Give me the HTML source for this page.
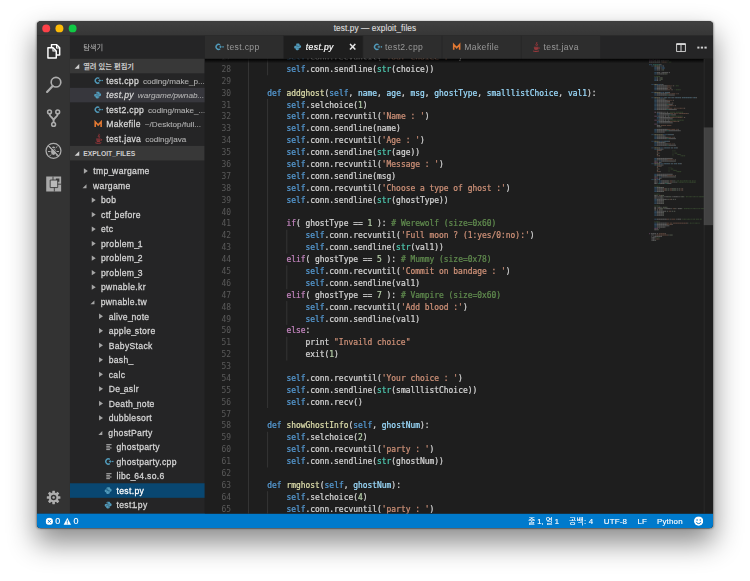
<!DOCTYPE html><html lang="ko"><head><meta charset="utf-8"><title>test.py — exploit_files</title><style>
*{box-sizing:border-box;margin:0;padding:0}
html,body{width:750px;height:581px;overflow:hidden;background:#fff}
#stage{position:absolute;left:0;top:0;width:1136px;height:880px;transform:scale(0.660211);transform-origin:0 0;font-family:"Liberation Sans","Noto Sans CJK KR",sans-serif}
#win{position:absolute;left:56px;top:32.300px;width:1024px;height:768px;background:#1e1e1e;border-radius:6px;overflow:hidden;box-shadow:0 0 1px rgba(0,0,0,.7)}
#shadow{position:absolute;left:56px;top:32.300px;width:1024px;height:768px;border-radius:6px;box-shadow:0 21px 42px 0 rgba(0,0,0,.46),0 0 3px rgba(0,0,0,.3)}
#title{position:absolute;left:0;top:0;width:100%;height:22px;background:linear-gradient(#404040,#363636);color:#dcdcdc;-webkit-text-stroke:.2px #dcdcdc;font-size:12.500px;text-align:center;line-height:22px;letter-spacing:.15px}
.tl{position:absolute;top:5px;width:12px;height:12px;border-radius:50%}
#act{position:absolute;left:0;top:22px;width:50px;height:724px;background:#333}
#act svg{position:absolute}
#side{position:absolute;left:50px;top:22px;width:204px;height:724px;background:#252526;overflow:hidden;color:#ccc}
.sb-title{position:absolute;left:20px;top:0;height:35px;line-height:35px;font-size:11px;color:#bbb;font-family:"Liberation Sans","Noto Sans CJK KR",sans-serif}
.sec{position:absolute;left:0;width:100%;height:22px;background:#383838;line-height:22px;font-size:11px;font-weight:bold;color:#ccc;padding-left:20px;white-space:nowrap}
.sec .kr{font-family:"Liberation Sans","Noto Sans CJK KR",sans-serif;font-weight:bold}
.row{position:absolute;left:0;width:100%;height:22px;line-height:24px;font-size:13px;white-space:nowrap;overflow:hidden;color:#d6d6d6}
.u{letter-spacing:-2px}
.row .nm{letter-spacing:.5px;-webkit-text-stroke:.38px currentColor}
.row .ds{font-size:12.300px;color:#b2b2b2;margin-left:6px;letter-spacing:0;-webkit-text-stroke:.15px currentColor}
.row.oe{padding-left:35.300px;line-height:23px}
.row.tr{line-height:23px}
.row.act{background:#37373d}
.row.it .nm,.row.it .ds{font-style:italic}
.row.sel{background:#094771;color:#fff}
.fi{display:inline-block;width:16px;height:16px;vertical-align:-3px;margin-right:3.700px}
.tw{display:inline-block;width:0;height:0;vertical-align:middle;margin-right:8px}
.tw.c{border-left:6px solid #a6a6a6;border-top:4.500px solid transparent;border-bottom:4.500px solid transparent;margin-left:1.500px;margin-right:8.500px;position:relative;top:-1.500px}
.tw.o{border-bottom:6.500px solid #a6a6a6;border-left:6.500px solid transparent;margin-left:0;margin-right:9.500px;position:relative;top:0}
.sec .tw.o{position:absolute;left:6.500px;top:7.500px;margin:0;border-bottom:7px solid #cfcfcf;border-left-width:7px}
#tabs{position:absolute;left:254px;top:22px;width:770px;height:35px;background:#252526}
.tab{position:absolute;top:0;width:120px;height:35px;background:#2d2d2d;color:#999;font-size:13px;line-height:35px;padding-left:13.600px;white-space:nowrap;border-right:1px solid #252526}
.tab .nm{letter-spacing:.55px}
.tab.act{background:#1e1e1e;color:#fff;font-style:italic}
.tab.act .nm{-webkit-text-stroke:.3px #fff}
.tab .close{position:absolute;left:98.800px;top:0;font-style:normal;font-size:19px;font-weight:bold;color:#e8e8e8}
#ed{position:absolute;left:254px;top:57px;width:770px;height:689px;background:#1e1e1e;overflow:hidden;font-family:"DejaVu Sans Mono","Liberation Mono",monospace;font-size:12px;color:#d4d4d4}
.ln{position:absolute;left:0;width:40px;height:18px;line-height:18px;text-align:right;color:#5a5a5a}
.cl{position:absolute;left:66px;height:18px;line-height:18px;white-space:pre;-webkit-text-stroke:.35px currentColor}
.ig{position:absolute;width:1px;background:#404040}
.k{color:#569cd6}.c{color:#c586c0}.s{color:#ce9178}.m{color:#608b4e}.n{color:#b5cea8}.f{color:#dcdcaa}.p{color:#9cdcfe}.t{color:#4ec9b0}
#edshadow{position:absolute;left:0;top:0;width:756px;height:7px;background:linear-gradient(#000 0,rgba(0,0,0,0) 100%);opacity:.95}
.mm{position:absolute;left:673px;top:0}
#vs{position:absolute;left:756px;top:0;width:14px;height:689px;border-left:1px solid #2f2f2f}
#vslider{position:absolute;left:756px;top:103.500px;width:14px;height:148px;background:rgba(121,121,121,.4)}
#status{position:absolute;left:0;top:746px;width:100%;height:22px;background:#007acc;color:#fff;font-size:12px;line-height:22px;white-space:nowrap}
#status span{position:absolute;top:0;font-family:"Liberation Sans","Noto Sans CJK KR",sans-serif;letter-spacing:.3px;-webkit-text-stroke:.2px #fff}
</style></head><body>
<div id="stage"><div id="shadow"></div><div id="win">
<div id="title"><span class="tl" style="left:8px;background:#fd4148"></span><span class="tl" style="left:28px;background:#fdbb07"></span><span class="tl" style="left:48px;background:#0fc944"></span>test.py — exploit_files</div>
<div id="act"><svg width="50" height="724" viewBox="0 0 50 724"><g fill="none" stroke="#fff" stroke-width="2.200" stroke-linejoin="round"><path d="M22 17.200v-3.600h7.800l4.600 4.800v10.800h-4.800"/><path d="M29.600 13.800v4.800h4.600" stroke-width="1.600"/><path d="M16.600 18.300h7.800l4.800 4.800v10.800h-12.600z"/><path d="M24.200 18.500v4.800h4.800" stroke-width="1.600"/></g><g fill="none" stroke="#adadad"><circle cx="28.800" cy="70.500" r="7.300" stroke-width="2.500"/><path d="M23.800 76.200l-8.500 9" stroke-width="3.300" stroke-linecap="round"/><g stroke-width="2.300"><circle cx="19" cy="115.500" r="2.900"/><circle cx="31.400" cy="115.500" r="2.900"/><circle cx="25.200" cy="134.500" r="2.900"/></g><path d="M19 118.500c0 5 6.200 6 6.200 10v3M31.400 118.500c0 5-6.200 6-6.200 10v3" stroke-width="2.900"/><circle cx="25" cy="174.500" r="11.300" stroke-width="1.900"/><path d="M17.400 166.900l15.400 15.400" stroke-width="1.600"/><path d="M21.500 170l-2.500-2.500M28.500 170l2.500-2.500M20.500 175.500h-3.800M29.500 175.500h3.800M21.500 180l-2.500 2.500M28.500 180l2.500 2.500" stroke-width="1.500"/></g><ellipse cx="25" cy="176" rx="3.600" ry="4.600" fill="#adadad"/><path d="M22.300 170.500a2.700 2.700 0 0 1 5.400 0z" fill="#adadad"/><path d="M18.600 165.700l15.400 15.400" stroke="#333" stroke-width="1.300"/><path d="M17.400 166.900l15.400 15.400" stroke="#adadad" stroke-width="1.500"/><path d="M14 213.500h22.600v22.600H14z" fill="#a9a9a9"/><path d="M22.500 216.200h5.200v5.200h-5.200z" fill="#3a3a3a" transform="translate(6.200 0)"/><path d="M20 218.700h11.400v11.400H20z" fill="#b9b9b9" stroke="#333" stroke-width="1.300"/><path d="M24.300 213.500v5.200M31.400 225h5.200M26.300 230.100v6" stroke="#333" stroke-width="1.300" fill="none"/><g transform="translate(25.200 699.500)"><g fill="#adadad"><rect x="-2" y="-10.300" width="4" height="5" rx=".6" transform="rotate(0)"/><rect x="-2" y="-10.300" width="4" height="5" rx=".6" transform="rotate(45)"/><rect x="-2" y="-10.300" width="4" height="5" rx=".6" transform="rotate(90)"/><rect x="-2" y="-10.300" width="4" height="5" rx=".6" transform="rotate(135)"/><rect x="-2" y="-10.300" width="4" height="5" rx=".6" transform="rotate(180)"/><rect x="-2" y="-10.300" width="4" height="5" rx=".6" transform="rotate(225)"/><rect x="-2" y="-10.300" width="4" height="5" rx=".6" transform="rotate(270)"/><rect x="-2" y="-10.300" width="4" height="5" rx=".6" transform="rotate(315)"/></g><circle r="5.800" fill="none" stroke="#adadad" stroke-width="3.200"/><circle r="1.900" fill="#adadad"/></g></svg></div>
<div id="side"><div class="sb-title">탐색기</div>
<div class="sec" style="top:35px"><span class="tw o"></span><span class="kr">열려 있는 편집기</span></div>
<div class="row oe" style="top:57px"><svg class="fi" viewBox="0 0 16 16"><path d="M9.400 4.800A3.900 3.900 0 1 0 9.400 11.200" fill="none" stroke="#519aba" stroke-width="2.100"/><path d="M8 8h4M10 6v4M12.800 8h2M13.800 7v2" stroke="#519aba" stroke-width="1.300" fill="none"/></svg><span class="nm">test.cpp</span><span class="ds">coding/make_p...</span></div>
<div class="row oe act it" style="top:79px"><svg class="fi" viewBox="0.600 -.700 17.400 17.400"><path d="M7.9 2.5c-2 0-2.6.8-2.6 1.8v1.3h2.8v.6H4.2c-1.2 0-1.9 1-1.9 2.3 0 1.400.7 2.300 1.800 2.300h1.100V9.500c0-1 .9-1.900 1.900-1.900h2.700c.9 0 1.500-.7 1.500-1.500V4.300c0-1-.9-1.800-1.800-1.800zM6.600 3.500a.5.500 0 1 1 0 1 .5.500 0 0 1 0-1z" fill="#519aba"/><path d="M8.100 13.500c2 0 2.600-.8 2.600-1.800v-1.300H7.900v-.6h3.900c1.200 0 1.900-1 1.900-2.300 0-1.400-.7-2.300-1.800-2.300h-1.100v1.300c0 1-.9 1.900-1.900 1.900H6.200c-.9 0-1.500.7-1.500 1.500v1.800c0 1 .9 1.800 1.800 1.800zM9.400 12.500a.5.500 0 1 1 0-1 .5.500 0 0 1 0 1z" fill="#519aba"/></svg><span class="nm">test.py</span><span class="ds">wargame/pwnab...</span></div>
<div class="row oe" style="top:101px"><svg class="fi" viewBox="0 0 16 16"><path d="M9.400 4.800A3.900 3.900 0 1 0 9.400 11.200" fill="none" stroke="#519aba" stroke-width="2.100"/><path d="M8 8h4M10 6v4M12.800 8h2M13.800 7v2" stroke="#519aba" stroke-width="1.300" fill="none"/></svg><span class="nm">test2.cpp</span><span class="ds">coding/make_...</span></div>
<div class="row oe" style="top:123px"><svg class="fi" viewBox="0 0 16 16"><path d="M3.200 12.300V4.500l4.500 4.800 4.500-4.800v7.800" fill="none" stroke="#e37933" stroke-width="2.400" stroke-linejoin="miter"/></svg><span class="nm">Makefile</span><span class="ds">~/Desktop/full...</span></div>
<div class="row oe" style="top:145px"><svg class="fi" viewBox="0 0 16 16"><path d="M8.800 .6c1.700 1.700-2.300 3-.7 5.300M10.100 3.400c.9 1.200-1.600 1.900-.4 3.300" fill="none" stroke="#cc3e44" stroke-width="1"/><path d="M4.600 8.600h6.800M5 10.400h6M5.600 12.200h4.800M3.400 14.200c2.600 1.200 6.800 1.100 9-.1M12 8.900c1.500 0 1.500 1.800-.5 2.100" fill="none" stroke="#cc3e44" stroke-width="1.050"/></svg><span class="nm">test.java</span><span class="ds">coding/java</span></div>
<div class="sec" style="top:167px"><span class="tw o"></span><span class="en" style="font-size:10.3px">EXPLOIT_FILES</span></div>
<div class="row tr" style="top:193.4px;padding-left:19.4px"><span class="tw c"></span><span class="nm">tmp<span class="u">_</span>wargame</span></div>
<div class="row tr" style="top:215.4px;padding-left:19.4px"><span class="tw o"></span><span class="nm">wargame</span></div>
<div class="row tr" style="top:237.4px;padding-left:31.0px"><span class="tw c"></span><span class="nm">bob</span></div>
<div class="row tr" style="top:259.4px;padding-left:31.0px"><span class="tw c"></span><span class="nm">ctf<span class="u">_</span>before</span></div>
<div class="row tr" style="top:281.4px;padding-left:31.0px"><span class="tw c"></span><span class="nm">etc</span></div>
<div class="row tr" style="top:303.4px;padding-left:31.0px"><span class="tw c"></span><span class="nm">problem<span class="u">_</span><span class="u">1</span></span></div>
<div class="row tr" style="top:325.4px;padding-left:31.0px"><span class="tw c"></span><span class="nm">problem<span class="u">_</span>2</span></div>
<div class="row tr" style="top:347.4px;padding-left:31.0px"><span class="tw c"></span><span class="nm">problem<span class="u">_</span>3</span></div>
<div class="row tr" style="top:369.4px;padding-left:31.0px"><span class="tw c"></span><span class="nm">pwnable.kr</span></div>
<div class="row tr" style="top:391.4px;padding-left:31.0px"><span class="tw o"></span><span class="nm">pwnable.tw</span></div>
<div class="row tr" style="top:413.4px;padding-left:42.599999999999994px"><span class="tw c"></span><span class="nm">alive<span class="u">_</span>note</span></div>
<div class="row tr" style="top:435.4px;padding-left:42.599999999999994px"><span class="tw c"></span><span class="nm">apple<span class="u">_</span>store</span></div>
<div class="row tr" style="top:457.4px;padding-left:42.599999999999994px"><span class="tw c"></span><span class="nm">BabyStack</span></div>
<div class="row tr" style="top:479.4px;padding-left:42.599999999999994px"><span class="tw c"></span><span class="nm">bash<span class="u">_</span></span></div>
<div class="row tr" style="top:501.4px;padding-left:42.599999999999994px"><span class="tw c"></span><span class="nm">calc</span></div>
<div class="row tr" style="top:523.4px;padding-left:42.599999999999994px"><span class="tw c"></span><span class="nm">De<span class="u">_</span>aslr</span></div>
<div class="row tr" style="top:545.4px;padding-left:42.599999999999994px"><span class="tw c"></span><span class="nm">Death<span class="u">_</span>note</span></div>
<div class="row tr" style="top:567.4px;padding-left:42.599999999999994px"><span class="tw c"></span><span class="nm">dubblesort</span></div>
<div class="row tr" style="top:589.4px;padding-left:42.599999999999994px"><span class="tw o"></span><span class="nm">ghostParty</span></div>
<div class="row tr" style="top:611.4px;padding-left:50.8px"><svg class="fi" viewBox="0 0 16 16"><path d="M4 4.500h8M4 7h5.500M4 9.500h8M4 12h5.500" stroke="#c5c5c5" stroke-width="1.300" fill="none"/></svg><span class="nm">ghostparty</span></div>
<div class="row tr" style="top:633.4px;padding-left:50.8px"><svg class="fi" viewBox="0 0 16 16"><path d="M9.400 4.800A3.900 3.900 0 1 0 9.400 11.200" fill="none" stroke="#519aba" stroke-width="2.100"/><path d="M8 8h4M10 6v4M12.800 8h2M13.800 7v2" stroke="#519aba" stroke-width="1.300" fill="none"/></svg><span class="nm">ghostparty.cpp</span></div>
<div class="row tr" style="top:655.4px;padding-left:50.8px"><svg class="fi" viewBox="0 0 16 16"><path d="M4 4.500h8M4 7h5.500M4 9.500h8M4 12h5.500" stroke="#c5c5c5" stroke-width="1.300" fill="none"/></svg><span class="nm">libc<span class="u">_</span>64.so.6</span></div>
<div class="row tr sel" style="top:677.4px;padding-left:50.8px"><svg class="fi" viewBox="0.600 -.700 17.400 17.400"><path d="M7.9 2.5c-2 0-2.6.8-2.6 1.8v1.3h2.8v.6H4.2c-1.2 0-1.9 1-1.9 2.3 0 1.400.7 2.300 1.800 2.300h1.100V9.500c0-1 .9-1.900 1.900-1.900h2.700c.9 0 1.500-.7 1.500-1.500V4.300c0-1-.9-1.800-1.800-1.800zM6.600 3.500a.5.500 0 1 1 0 1 .5.500 0 0 1 0-1z" fill="#519aba"/><path d="M8.100 13.500c2 0 2.600-.8 2.600-1.800v-1.300H7.900v-.6h3.900c1.200 0 1.900-1 1.900-2.300 0-1.400-.7-2.300-1.800-2.300h-1.100v1.300c0 1-.9 1.900-1.900 1.900H6.200c-.9 0-1.500.7-1.500 1.500v1.800c0 1 .9 1.800 1.800 1.800zM9.400 12.500a.5.500 0 1 1 0-1 .5.500 0 0 1 0 1z" fill="#519aba"/></svg><span class="nm">test.py</span></div>
<div class="row tr" style="top:699.4px;padding-left:50.8px"><svg class="fi" viewBox="0.600 -.700 17.400 17.400"><path d="M7.9 2.5c-2 0-2.6.8-2.6 1.8v1.3h2.8v.6H4.2c-1.2 0-1.9 1-1.9 2.3 0 1.400.7 2.300 1.800 2.300h1.100V9.500c0-1 .9-1.900 1.900-1.900h2.700c.9 0 1.500-.7 1.500-1.500V4.300c0-1-.9-1.800-1.800-1.800zM6.600 3.500a.5.500 0 1 1 0 1 .5.500 0 0 1 0-1z" fill="#519aba"/><path d="M8.100 13.500c2 0 2.600-.8 2.600-1.800v-1.300H7.900v-.6h3.900c1.200 0 1.900-1 1.900-2.300 0-1.400-.7-2.300-1.800-2.300h-1.100v1.300c0 1-.9 1.900-1.900 1.900H6.200c-.9 0-1.500.7-1.500 1.500v1.800c0 1 .9 1.800 1.800 1.800zM9.400 12.500a.5.500 0 1 1 0-1 .5.500 0 0 1 0 1z" fill="#519aba"/></svg><span class="nm">test<span class="u">1</span>.py</span></div></div>
<div id="tabs"><div class="tab" style="left:0px"><svg class="fi" viewBox="0 0 16 16"><path d="M9.400 4.800A3.900 3.900 0 1 0 9.400 11.200" fill="none" stroke="#519aba" stroke-width="2.100"/><path d="M8 8h4M10 6v4M12.800 8h2M13.800 7v2" stroke="#519aba" stroke-width="1.300" fill="none"/></svg><span class="nm">test.cpp</span></div>
<div class="tab act" style="left:120px"><svg class="fi" viewBox="0.600 -.700 17.400 17.400"><path d="M7.9 2.5c-2 0-2.6.8-2.6 1.8v1.3h2.8v.6H4.2c-1.2 0-1.9 1-1.9 2.3 0 1.400.7 2.300 1.800 2.300h1.100V9.500c0-1 .9-1.900 1.900-1.900h2.700c.9 0 1.500-.7 1.500-1.500V4.300c0-1-.9-1.800-1.800-1.800zM6.600 3.500a.5.500 0 1 1 0 1 .5.500 0 0 1 0-1z" fill="#519aba"/><path d="M8.100 13.500c2 0 2.600-.8 2.600-1.800v-1.300H7.900v-.6h3.900c1.200 0 1.900-1 1.900-2.300 0-1.400-.7-2.300-1.800-2.300h-1.100v1.300c0 1-.9 1.900-1.900 1.900H6.200c-.9 0-1.500.7-1.500 1.500v1.800c0 1 .9 1.800 1.800 1.800zM9.400 12.500a.5.500 0 1 1 0-1 .5.500 0 0 1 0 1z" fill="#519aba"/></svg><span class="nm">test.py</span><span class="close">×</span></div>
<div class="tab" style="left:240px"><svg class="fi" viewBox="0 0 16 16"><path d="M9.400 4.800A3.900 3.900 0 1 0 9.400 11.200" fill="none" stroke="#519aba" stroke-width="2.100"/><path d="M8 8h4M10 6v4M12.800 8h2M13.800 7v2" stroke="#519aba" stroke-width="1.300" fill="none"/></svg><span class="nm">test2.cpp</span></div>
<div class="tab" style="left:360px"><svg class="fi" viewBox="0 0 16 16"><path d="M3.200 12.300V4.500l4.500 4.800 4.500-4.800v7.800" fill="none" stroke="#e37933" stroke-width="2.400" stroke-linejoin="miter"/></svg><span class="nm">Makefile</span></div>
<div class="tab" style="left:480px"><svg class="fi" viewBox="0 0 16 16"><path d="M8.800 .6c1.700 1.700-2.300 3-.7 5.300M10.100 3.400c.9 1.200-1.600 1.900-.4 3.300" fill="none" stroke="#cc3e44" stroke-width="1"/><path d="M4.600 8.600h6.800M5 10.400h6M5.600 12.200h4.800M3.400 14.200c2.600 1.200 6.800 1.100 9-.1M12 8.900c1.500 0 1.500 1.800-.5 2.100" fill="none" stroke="#cc3e44" stroke-width="1.050"/></svg><span class="nm">test.java</span></div><svg style="position:absolute;left:714px;top:11px" width="15" height="14" viewBox="0 0 15 14"><path d="M.8 1.500h13.400v11.700H.8zM7.500 1.500v11.700" fill="none" stroke="#d8d8d8" stroke-width="1.500"/><path d="M.5.500h14v2.800H.500z" fill="#d8d8d8"/></svg><svg style="position:absolute;left:745.500px;top:15.300px" width="15" height="4" viewBox="0 0 15 4"><path d="M0 .3h3.400v3.400H0zM5.500.3h3.400v3.400H5.500zM11 .3h3.400v3.400H11z" fill="#d0d0d0"/></svg></div>
<div id="ed"><div class="ln" style="top:-11.1px">27</div><div class="cl" style="top:-11.1px">        <span class="k">self</span>.conn.recvuntil(<span class="s">'Your choice : '</span>)</div>
<div class="ln" style="top:6.9px">28</div><div class="cl" style="top:6.9px">        <span class="k">self</span>.conn.sendline(<span class="t">str</span>(choice))</div>
<div class="ln" style="top:24.9px">29</div><div class="cl" style="top:24.9px"></div>
<div class="ln" style="top:42.9px">30</div><div class="cl" style="top:42.9px">    <span class="k">def</span> <span class="f">addghost</span>(<span class="k">self</span>, <span class="p">name</span>, <span class="p">age</span>, <span class="p">msg</span>, <span class="p">ghostType</span>, <span class="p">smalllistChoice</span>, <span class="p">val1</span>):</div>
<div class="ln" style="top:60.9px">31</div><div class="cl" style="top:60.9px">        <span class="k">self</span>.selchoice(<span class="n">1</span>)</div>
<div class="ln" style="top:78.9px">32</div><div class="cl" style="top:78.9px">        <span class="k">self</span>.conn.recvuntil(<span class="s">'Name : '</span>)</div>
<div class="ln" style="top:96.9px">33</div><div class="cl" style="top:96.9px">        <span class="k">self</span>.conn.sendline(name)</div>
<div class="ln" style="top:114.9px">34</div><div class="cl" style="top:114.9px">        <span class="k">self</span>.conn.recvuntil(<span class="s">'Age : '</span>)</div>
<div class="ln" style="top:132.9px">35</div><div class="cl" style="top:132.9px">        <span class="k">self</span>.conn.sendline(<span class="t">str</span>(age))</div>
<div class="ln" style="top:150.9px">36</div><div class="cl" style="top:150.9px">        <span class="k">self</span>.conn.recvuntil(<span class="s">'Message : '</span>)</div>
<div class="ln" style="top:168.9px">37</div><div class="cl" style="top:168.9px">        <span class="k">self</span>.conn.sendline(msg)</div>
<div class="ln" style="top:186.9px">38</div><div class="cl" style="top:186.9px">        <span class="k">self</span>.conn.recvuntil(<span class="s">'Choose a type of ghost :'</span>)</div>
<div class="ln" style="top:204.9px">39</div><div class="cl" style="top:204.9px">        <span class="k">self</span>.conn.sendline(<span class="t">str</span>(ghostType))</div>
<div class="ln" style="top:222.9px">40</div><div class="cl" style="top:222.9px"></div>
<div class="ln" style="top:240.9px">41</div><div class="cl" style="top:240.9px">        <span class="c">if</span>( ghostType == <span class="n">1</span> ): <span class="m"># Werewolf (size=0x60)</span></div>
<div class="ln" style="top:258.9px">42</div><div class="cl" style="top:258.9px">            <span class="k">self</span>.conn.recvuntil(<span class="s">'Full moon ? (1:yes/0:no):'</span>)</div>
<div class="ln" style="top:276.9px">43</div><div class="cl" style="top:276.9px">            <span class="k">self</span>.conn.sendline(<span class="t">str</span>(val1))</div>
<div class="ln" style="top:294.9px">44</div><div class="cl" style="top:294.9px">        <span class="c">elif</span>( ghostType == <span class="n">5</span> ): <span class="m"># Mummy (size=0x78)</span></div>
<div class="ln" style="top:312.9px">45</div><div class="cl" style="top:312.9px">            <span class="k">self</span>.conn.recvuntil(<span class="s">'Commit on bandage : '</span>)</div>
<div class="ln" style="top:330.9px">46</div><div class="cl" style="top:330.9px">            <span class="k">self</span>.conn.sendline(val1)</div>
<div class="ln" style="top:348.9px">47</div><div class="cl" style="top:348.9px">        <span class="c">elif</span>( ghostType == <span class="n">7</span> ): <span class="m"># Vampire (size=0x60)</span></div>
<div class="ln" style="top:366.9px">48</div><div class="cl" style="top:366.9px">            <span class="k">self</span>.conn.recvuntil(<span class="s">'Add blood :'</span>)</div>
<div class="ln" style="top:384.9px">49</div><div class="cl" style="top:384.9px">            <span class="k">self</span>.conn.sendline(val1)</div>
<div class="ln" style="top:402.9px">50</div><div class="cl" style="top:402.9px">        <span class="c">else</span>:</div>
<div class="ln" style="top:420.9px">51</div><div class="cl" style="top:420.9px">            print <span class="s">"Invaild choice"</span></div>
<div class="ln" style="top:438.9px">52</div><div class="cl" style="top:438.9px">            exit(<span class="n">1</span>)</div>
<div class="ln" style="top:456.9px">53</div><div class="cl" style="top:456.9px"></div>
<div class="ln" style="top:474.9px">54</div><div class="cl" style="top:474.9px">        <span class="k">self</span>.conn.recvuntil(<span class="s">'Your choice : '</span>)</div>
<div class="ln" style="top:492.9px">55</div><div class="cl" style="top:492.9px">        <span class="k">self</span>.conn.sendline(<span class="t">str</span>(smalllistChoice))</div>
<div class="ln" style="top:510.9px">56</div><div class="cl" style="top:510.9px">        <span class="k">self</span>.conn.recv()</div>
<div class="ln" style="top:528.9px">57</div><div class="cl" style="top:528.9px"></div>
<div class="ln" style="top:546.9px">58</div><div class="cl" style="top:546.9px">    <span class="k">def</span> <span class="f">showGhostInfo</span>(<span class="k">self</span>, <span class="p">ghostNum</span>):</div>
<div class="ln" style="top:564.9px">59</div><div class="cl" style="top:564.9px">        <span class="k">self</span>.selchoice(<span class="n">2</span>)</div>
<div class="ln" style="top:582.9px">60</div><div class="cl" style="top:582.9px">        <span class="k">self</span>.conn.recvuntil(<span class="s">'party : '</span>)</div>
<div class="ln" style="top:600.9px">61</div><div class="cl" style="top:600.9px">        <span class="k">self</span>.conn.sendline(<span class="t">str</span>(ghostNum))</div>
<div class="ln" style="top:618.9px">62</div><div class="cl" style="top:618.9px"></div>
<div class="ln" style="top:636.9px">63</div><div class="cl" style="top:636.9px">    <span class="k">def</span> <span class="f">rmghost</span>(<span class="k">self</span>, <span class="p">ghostNum</span>):</div>
<div class="ln" style="top:654.9px">64</div><div class="cl" style="top:654.9px">        <span class="k">self</span>.selchoice(<span class="n">4</span>)</div>
<div class="ln" style="top:672.9px">65</div><div class="cl" style="top:672.9px">        <span class="k">self</span>.conn.recvuntil(<span class="s">'party : '</span>)</div>
<div class="ig" style="left:66.0px;top:-11.1px;height:720px"></div>
<div class="ig" style="left:94.9px;top:-11.1px;height:36px"></div>
<div class="ig" style="left:94.9px;top:60.9px;height:468px"></div>
<div class="ig" style="left:94.9px;top:564.9px;height:54px"></div>
<div class="ig" style="left:94.9px;top:654.9px;height:54px"></div>
<div class="ig" style="left:123.8px;top:258.9px;height:36px"></div>
<div class="ig" style="left:123.8px;top:312.9px;height:36px"></div>
<div class="ig" style="left:123.8px;top:366.9px;height:36px"></div>
<div class="ig" style="left:123.8px;top:420.9px;height:36px"></div><svg class="mm" width="84" height="276" viewBox="0 0 84 276"><path d="M0 1h4M9 1h6M0 3h6M8 81h2M8 87h4M8 93h4M8 99h4M8 157h6M8 181h6M8 257h6M0 265h2" stroke="#c586c0" stroke-width="1.200" stroke-dasharray=".7 .3" fill="none" opacity=".62"/><path d="M5 1h3M16 1h1M7 3h4M12 3h5M18 3h6M25 3h2M28 3h2M0 5h17M18 5h1M16 9h3M16 11h1M21 11h2M12 13h5M18 13h1M12 15h5M18 15h1M12 17h5M18 17h1M12 21h5M18 21h1M20 21h9M30 21h2M12 23h11M27 23h1M12 29h2M15 29h1M12 31h2M15 31h1M12 33h2M15 33h1M12 39h1M17 39h1M20 39h2M12 41h16M37 41h1M12 43h16M33 43h1M12 45h16M33 45h1M12 47h16M35 47h1M17 51h1M22 51h1M30 51h2M12 53h16M44 53h1M12 55h15M30 55h9M16 59h1M21 59h1M27 59h1M32 59h1M37 59h1M48 59h1M65 59h1M71 59h2M12 61h11M24 61h1M12 63h16M37 63h1M12 65h20M12 67h16M36 67h1M12 69h15M30 69h6M12 71h16M40 71h1M12 73h19M12 75h16M54 75h1M12 77h15M30 77h12M10 81h1M12 81h9M22 81h2M27 81h2M16 83h16M59 83h1M16 85h15M34 85h7M12 87h1M14 87h9M24 87h2M29 87h2M16 89h16M54 89h1M16 91h20M12 93h1M14 93h9M24 93h2M29 93h2M16 95h16M45 95h1M16 97h20M12 99h1M12 101h5M12 103h5M18 103h1M12 107h16M44 107h1M12 109h15M30 109h18M12 111h12M21 115h1M26 115h1M36 115h2M12 117h11M24 117h1M12 119h16M38 119h1M12 121h15M30 121h11M15 125h1M20 125h1M30 125h2M12 127h11M24 127h1M12 129h16M38 129h1M12 131h15M30 131h11M16 135h1M21 135h1M31 135h1M36 135h1M42 135h2M12 137h10M18 139h1M13 141h1M15 143h1M13 145h1M16 147h1M12 151h24M12 153h16M40 153h1M8 155h4M13 155h1M19 155h11M31 155h8M40 155h1M15 157h4M16 159h1M21 159h1M31 159h1M36 159h1M42 159h1M48 159h2M12 161h10M18 163h1M13 165h1M15 167h1M13 169h1M17 171h1M12 175h24M12 177h16M40 177h1M8 179h4M13 179h1M19 179h11M31 179h8M40 179h1M15 181h4M10 183h1M15 183h2M8 185h4M13 185h1M19 185h10M30 185h1M35 185h1M38 185h1M8 187h4M13 187h1M19 187h10M30 187h1M35 187h1M38 187h1M41 187h1M8 189h5M17 189h7M28 189h6M12 195h9M22 195h1M12 197h10M25 197h1M27 197h1M30 197h1M35 197h1M40 197h1M43 197h1M46 197h1M51 197h1M12 199h10M25 199h1M27 199h1M30 199h1M35 199h1M40 199h1M43 199h1M46 199h1M51 199h1M12 201h9M22 201h1M8 207h4M13 207h1M18 207h1M8 209h4M13 209h2M16 209h4M21 209h1M23 209h1M25 209h4M33 209h1M35 209h1M37 209h8M46 209h1M52 209h1M8 211h4M13 211h2M16 211h4M21 211h1M12 213h15M29 213h1M34 213h1M37 213h1M40 213h1M12 215h9M22 215h1M12 217h9M22 217h1M12 219h9M22 219h1M8 225h3M12 225h1M14 225h4M19 225h1M8 227h3M12 227h1M17 227h1M23 227h1M25 227h8M34 227h1M39 227h1M42 227h1M44 227h4M49 227h1M8 229h3M12 229h2M15 229h4M20 229h1M12 231h14M28 231h1M33 231h1M36 231h1M39 231h1M12 233h9M22 233h1M12 235h9M22 235h1M12 237h9M22 237h1M12 243h15M30 243h1M32 243h1M41 243h1M43 243h4M48 243h1M12 249h15M58 249h1M12 251h15M35 251h1M12 253h19M12 255h13M8 259h5M14 259h1M3 265h8M12 265h2M25 265h1M4 267h2M7 267h1M9 267h1M29 267h1M4 269h1M6 269h1M8 269h12M4 271h6M4 273h5M4 275h5M10 275h1" stroke="#d4d4d4" stroke-width="1.200" stroke-dasharray=".7 .3" fill="none" opacity=".62"/><path d="M20 5h7M28 41h5M34 41h1M36 41h1M28 43h5M28 45h1M30 45h1M32 45h1M28 47h4M33 47h2M28 53h5M34 53h6M41 53h1M43 53h1M28 63h5M34 63h1M36 63h1M28 67h4M33 67h1M35 67h1M28 71h8M37 71h1M39 71h1M28 75h7M36 75h1M38 75h4M43 75h2M46 75h5M52 75h2M32 83h5M38 83h4M43 83h1M45 83h14M32 89h7M40 89h2M43 89h7M51 89h1M53 89h1M32 95h4M37 95h5M43 95h2M18 101h8M27 101h7M28 107h5M34 107h6M41 107h1M43 107h1M28 119h6M35 119h1M37 119h1M28 129h6M35 129h1M37 129h1M12 139h6M12 143h3M12 147h4M28 153h8M37 153h1M39 153h1M12 163h6M12 167h3M12 171h5M28 177h8M37 177h1M39 177h1M32 185h3M32 187h3M22 197h3M32 197h3M48 197h3M22 199h3M32 199h3M48 199h3M15 207h3M31 213h3M14 227h3M36 227h3M30 231h3M27 243h3M34 243h6M27 249h4M32 249h3M36 249h22M27 251h3M31 251h4M15 265h10M11 267h18M10 273h6" stroke="#ce9178" stroke-width="1.200" stroke-dasharray=".7 .3" fill="none" opacity=".62"/><path d="M28 5h1M30 5h4M8 27h1M10 27h7M39 41h1M41 41h4M39 47h1M41 47h7M30 81h1M32 81h8M41 81h11M32 87h1M34 87h5M40 87h11M32 93h1M34 93h7M42 93h11M36 139h1M39 139h1M36 141h1M39 141h1M36 143h1M39 143h4M36 145h1M43 145h5M36 147h1M48 147h7M30 165h1M33 165h1M30 167h1M33 167h4M30 169h1M37 169h5M30 171h1M42 171h7M40 185h1M42 185h4M47 185h4M52 185h7M60 185h4M65 185h3M69 185h2M43 187h1M45 187h8M54 187h3M58 187h2M61 187h10M8 193h1M10 193h5M16 193h1M8 205h1M10 205h5M16 205h1M54 209h1M56 209h4M61 209h5M67 209h4M72 209h3M76 209h8M8 223h1M10 223h5M16 223h1M51 227h1M53 227h9M63 227h3M67 227h4M72 227h2M75 227h3M79 227h5M50 243h1M52 243h4M57 243h6M64 243h2M67 243h3M71 243h5M77 243h3M8 247h1M10 247h5M16 247h1M60 249h1M62 249h3M66 249h3M70 249h4M75 249h2M11 271h1M13 271h3" stroke="#608b4e" stroke-width="1.200" stroke-dasharray=".7 .3" fill="none" opacity=".62"/><path d="M0 9h5M4 11h3M17 11h4M8 13h4M20 13h4M8 15h4M20 15h4M8 17h4M8 21h4M8 23h4M8 29h4M8 31h4M8 33h4M4 39h3M13 39h4M8 41h4M8 43h4M8 45h4M8 47h4M4 51h3M18 51h4M8 53h4M8 55h4M4 59h3M17 59h4M8 61h4M8 63h4M8 65h4M8 67h4M8 69h4M8 71h4M8 73h4M8 75h4M8 77h4M12 83h4M12 85h4M12 89h4M12 91h4M12 95h4M12 97h4M8 107h4M8 109h4M8 111h4M4 115h3M22 115h4M8 117h4M8 119h4M8 121h4M4 125h3M16 125h4M8 127h4M8 129h4M8 131h4M4 135h3M17 135h4M8 137h4M8 151h4M8 153h4M15 155h4M4 159h3M17 159h4M8 161h4M8 175h4M8 177h4M15 179h4M4 183h3M11 183h4M15 185h4M15 187h4M8 195h4M8 197h4M8 199h4M8 201h4M8 213h4M8 215h4M8 217h4M8 219h4M8 231h4M8 233h4M8 235h4M8 237h4M8 243h4M8 249h4M8 251h4M8 253h4M8 255h4" stroke="#569cd6" stroke-width="1.200" stroke-dasharray=".7 .3" fill="none" opacity=".62"/><path d="M6 9h10M27 55h3M27 69h3M27 77h3M31 85h3M27 109h3M27 121h3M27 131h3M14 189h3M25 189h3" stroke="#4ec9b0" stroke-width="1.200" stroke-dasharray=".7 .3" fill="none" opacity=".62"/><path d="M8 11h8M8 39h4M8 51h9M8 59h8M8 115h13M8 125h7M8 135h8M8 159h8M8 183h2" stroke="#dcdcaa" stroke-width="1.200" stroke-dasharray=".7 .3" fill="none" opacity=".62"/><path d="M20 17h3M23 23h4M17 29h4M17 31h4M17 33h1M23 61h1M25 81h1M27 87h1M27 93h1M17 103h1M23 117h1M23 127h1M12 141h1M12 145h1M30 155h1M39 155h1M12 165h1M12 169h1M30 179h1M39 179h1M29 185h1M37 185h1M29 187h1M37 187h1M40 187h1M21 195h1M26 197h1M29 197h1M36 197h4M42 197h1M45 197h1M26 199h1M29 199h1M36 199h4M42 199h1M45 199h1M21 201h1M19 207h4M20 209h1M29 209h4M48 209h4M20 211h1M28 213h1M36 213h1M39 213h1M21 215h1M21 217h1M21 219h1M21 225h7M18 227h4M40 227h1M48 227h1M19 229h1M27 231h1M35 231h1M38 231h1M21 233h1M21 235h1M21 237h1M47 243h1M15 257h1M13 259h1M31 267h5M9 275h1" stroke="#b5cea8" stroke-width="1.200" stroke-dasharray=".7 .3" fill="none" opacity=".62"/><path d="M19 39h1M24 51h6M23 59h4M29 59h3M34 59h3M39 59h9M50 59h15M67 59h4M28 115h8M22 125h8M23 135h8M33 135h3M38 135h4M23 159h8M33 159h3M38 159h4M44 159h4" stroke="#9cdcfe" stroke-width="1.200" stroke-dasharray=".7 .3" fill="none" opacity=".62"/></svg><div id="edshadow"></div><div id="vs"></div><div id="vslider"></div></div>
<div id="status"><svg style="position:absolute;left:13px;top:5.500px" width="11.500" height="11.500" viewBox="0 0 13 13"><circle cx="6.5" cy="6.5" r="6.2" fill="#fff"/><path d="M4.2 4.2l4.600 4.600M8.800 4.200l-4.600 4.600" stroke="#007acc" stroke-width="1.700"/></svg><span style="left:27.500px;font-size:13.500px">0</span><svg style="position:absolute;left:40px;top:5.500px" width="12" height="11.500" viewBox="0 0 14 13" preserveAspectRatio="none"><path d="M7 .3L13.800 12.700H.2z" fill="#fff"/><path d="M7 4.500v4.200M7 9.800v1.600" stroke="#007acc" stroke-width="1.500"/></svg><span style="left:55.500px;font-size:13.500px">0</span><span id="st1" style="left:744px;font-size:11.500px;letter-spacing:0">줄 1, 열 1</span><span id="st2" style="left:806px">공백: 4</span><span id="st3" style="left:858.500px">UTF-8</span><span id="st4" style="left:909.500px">LF</span><span id="st5" style="left:939px">Python</span><svg style="position:absolute;left:994.500px;top:4px" width="14.500" height="14.500" viewBox="0 0 14 14"><circle cx="7" cy="7" r="6.800" fill="#fff"/><circle cx="4.700" cy="5.300" r="1.100" fill="#007acc"/><circle cx="9.300" cy="5.300" r="1.100" fill="#007acc"/><path d="M3.500 8.200a3.700 3.700 0 0 0 7 0" fill="none" stroke="#007acc" stroke-width="1.300"/></svg></div>
</div></div></body></html>
